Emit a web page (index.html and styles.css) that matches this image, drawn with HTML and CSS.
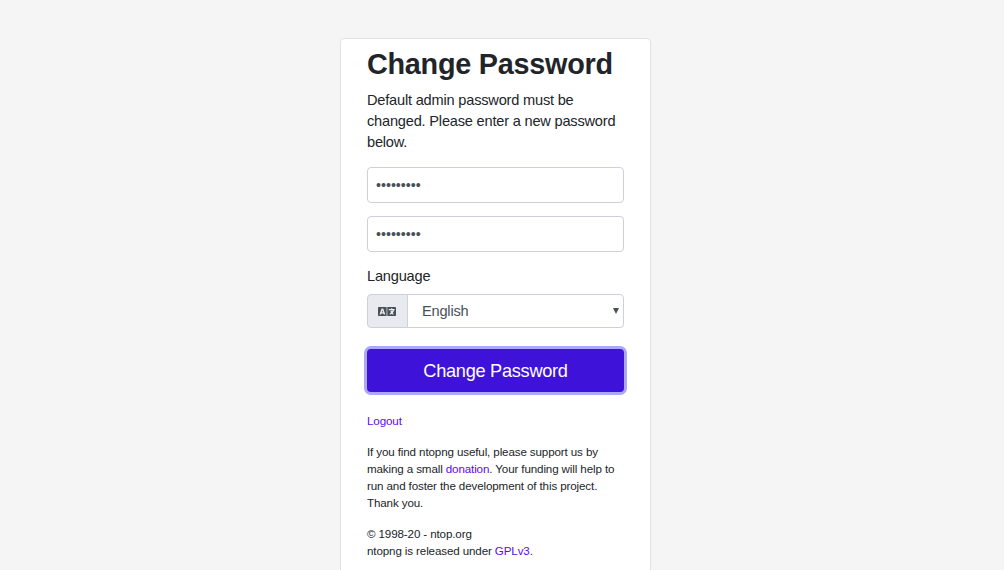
FILE: index.html
```html
<!DOCTYPE html>
<html lang="en">
<head>
    <meta charset="UTF-8">
    <meta name="viewport" content="width=device-width, initial-scale=1">
    <title>Change Password</title>
    <link rel="stylesheet" href="styles.css">
</head>
<body>
    <div class="container">
        <form class="form-signin">
            <h1 class="form-title">Change Password</h1>
            <p class="intro">Default admin password must be changed. Please enter a new password below.</p>

            <input type="password" class="form-control" value="ntopadmin">
            <input type="password" class="form-control" value="ntopadmin">

            <label class="form-label" for="language">Language</label>
            <div class="input-group">
                <span class="input-group-text">
                    <svg class="icon-language" viewBox="0 0 18 9">
                        <path fill="#495057" fill-rule="evenodd" d="M.7 0H8.6V9H.7Q0 9 0 8.3V.7Q0 0 .7 0ZM3.6 1.4 1.5 7.6H3L3.4 6.4H5.4L5.8 7.6H7.3L5.2 1.4ZM4.4 3.4 5 5.2H3.8Z"/>
                        <path fill="#495057" d="M9.3 0H17.3Q18 0 18 .7V8.3Q18 9 17.3 9H9.3Z"/>
                        <path fill="none" stroke="#e9ecef" stroke-width="1.2" d="M10.8 2.6H16.6M13.7 1.3V2.6M15.6 2.8Q15 5.8 11.8 7.2M12.6 4.4H15.6M13 5Q13.8 6.4 15.4 7.2"/>
                    </svg>
                </span>
                <select class="form-select" id="language">
                    <option>English</option>
                </select>
                <svg class="select-arrow" viewBox="0 0 6 6">
                    <path fill="#495057" d="M0 0H6L3 6Z"/>
                </svg>
            </div>

            <button class="btn-primary" type="button">Change Password</button>

            <div class="footer">
                <p><a href="#">Logout</a></p>
                <p>If you find ntopng useful, please support us by making a small <a href="#">donation</a>. Your funding will help to run and foster the development of this project. Thank you.</p>
                <p>&copy; 1998-20 - ntop.org<br>ntopng is released under <a href="#">GPLv3</a>.</p>
            </div>
        </form>
    </div>
</body>
</html>
```
FILE: styles.css
```css
* {
    box-sizing: border-box;
}

/* Body styling */
body {
    margin: 0;
    height: 100vh;
    overflow: hidden;
    font-family: "Liberation Sans", Arial, sans-serif;
    font-size: 14.6px;
    letter-spacing: -0.2px;
    line-height: 21.2px;
    color: #212529;
    background-color: #f5f5f5;
}

/* Container */
.container {
    display: flex;
    justify-content: center;
    padding: 38px 13px 0 0;
}

.form-signin {
    width: 311px;
    height: 560px;
    padding: 8px 26px;
    background-color: #ffffff;
    border: 1px solid #e2e2e2;
    border-radius: 4px;
}

.form-title {
    margin: 0 0 9px;
    font-size: 28.8px;
    letter-spacing: -0.26px;
    line-height: 34px;
}

.intro {
    height: 63px;
    margin: 0 0 14px;
}

/* Inputs */
.form-control {
    display: block;
    width: 100%;
    height: 36px;
    margin-bottom: 13px;
    padding: 0 8px;
    font-family: inherit;
    font-size: 14.2px;
    color: #495057;
    background-color: #ffffff;
    border: 1px solid #ced0de;
    border-radius: 4px;
}

.form-label {
    display: block;
    height: 22px;
    margin-bottom: 7px;
    padding-top: 1px;
}

/* Language select */
.input-group {
    position: relative;
    display: flex;
    height: 34px;
    margin-bottom: 21px;
}

.input-group-text {
    display: flex;
    align-items: center;
    justify-content: center;
    width: 41px;
    padding-right: 1px;
    background-color: #e9eaef;
    border: 1px solid #ced0de;
    border-radius: 4px 0 0 4px;
}

.icon-language {
    width: 18px;
    height: 9px;
}

.form-select {
    flex: 1;
    margin-left: -1px;
    padding: 0 14px 1px;
    font-family: inherit;
    font-size: 14.6px;
    letter-spacing: -0.2px;
    color: #495057;
    background-color: #ffffff;
    border: 1px solid #ced0de;
    border-radius: 0 4px 4px 0;
    appearance: none;
}

.select-arrow {
    position: absolute;
    top: 14px;
    right: 5px;
    width: 6px;
    height: 6px;
}

/* Submit button */
.btn-primary {
    display: block;
    width: 100%;
    height: 43px;
    padding: 1px 0 0;
    font-family: inherit;
    font-size: 18.2px;
    letter-spacing: -0.28px;
    color: #ffffff;
    background-color: #3f12da;
    border: none;
    border-radius: 4px;
    box-shadow: 0 0 0 3px #a9a8fb;
}

/* Footer */
.footer {
    margin-top: 20px;
    font-size: 11.6px;
    letter-spacing: -0.12px;
    line-height: 17px;
}

.footer p {
    margin: 0 0 14px;
}

a {
    color: #6008f5;
    text-decoration: none;
}
```
